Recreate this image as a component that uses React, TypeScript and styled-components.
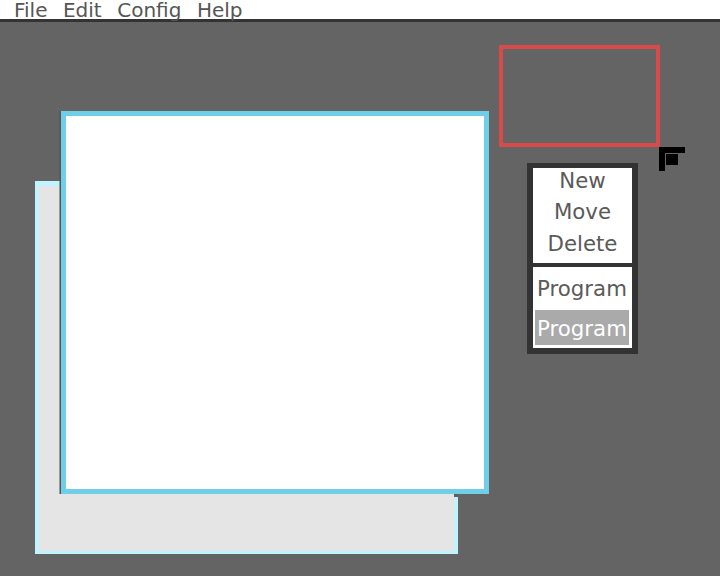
import React from "react";
import styled, { createGlobalStyle } from "styled-components";

const Global = createGlobalStyle`
  html, body { margin: 0; padding: 0; background: #646464; overflow: hidden; }
  body { font-family: "DejaVu Sans", "Liberation Sans", sans-serif; }
`;

const Screen = styled.div`
  width: 720px;
  height: 576px;
  display: flex;
  flex-direction: column;
  background: #646464;
`;

const MenuBar = styled.div`
  height: 19px;
  background: #ffffff;
  border-bottom: 3px solid #333333;
  display: flex;
  align-items: flex-start;
  gap: 15.5px;
  padding-left: 14px;
  flex-shrink: 0;
`;

const MenuItem = styled.span`
  font-size: 20px;
  line-height: 19px;
  padding-top: 0.5px;
  color: #555555;
`;

const Desktop = styled.div`
  position: relative;
  flex: 1;
`;

const Window = styled.div<{ $x: number; $y: number; $w: number; $h: number; $front?: boolean }>`
  position: absolute;
  left: ${(p) => p.$x}px;
  top: ${(p) => p.$y - 22}px;
  width: ${(p) => p.$w}px;
  height: ${(p) => p.$h}px;
  box-sizing: border-box;
  background: ${(p) => (p.$front ? "#ffffff" : "#e5e5e5")};
  border: ${(p) => (p.$front ? "5px solid #70cfe8" : "4px solid #bff3fd")};
  ${(p) => (p.$front ? "box-shadow: -1.5px 0 0 #555555;" : "border-top-width: 5px; border-bottom-width: 3px;")}
`;

const Notch = styled.div`
  position: absolute;
  left: 454px;
  top: ${493 - 22}px;
  width: 4px;
  height: 4px;
  background: #5e5e5e;
`;

const Selection = styled.div`
  position: absolute;
  left: 499px;
  top: ${45 - 22}px;
  width: 161px;
  height: 102px;
  box-sizing: border-box;
  border: 4px solid #d94b4b;
`;

const Cursor = styled.svg`
  position: absolute;
  left: 659px;
  top: ${147 - 22}px;
`;

const Palette = styled.div`
  position: absolute;
  left: 527px;
  top: ${163 - 22}px;
  width: 111px;
  box-sizing: border-box;
  background: #333333;
  padding: 5px 6px 6px 6px;
  display: flex;
  flex-direction: column;
  gap: 4px;
`;

const Section = styled.div<{ $pad?: string }>`
  background: #ffffff;
  display: flex;
  flex-direction: column;
  padding: ${(p) => p.$pad || "0"};
`;

const ToolItem = styled.div`
  height: 31.5px;
  box-sizing: border-box;
  line-height: 23.5px;
  padding-top: 0.5px;
  padding-bottom: 7.5px;
  font-size: 21.3px;
  color: #5a5a5a;
  text-align: center;
`;

const ModeItem = styled.div<{ $active?: boolean }>`
  height: 35px;
  box-sizing: border-box;
  padding-top: 2px;
  line-height: 33px;
  font-size: 21.3px;
  text-align: center;
  margin: 0 3px 0 2px;
  color: ${(p) => (p.$active ? "#ffffff" : "#5a5a5a")};
  background: ${(p) => (p.$active ? "#aaaaaa" : "transparent")};
`;

const Spacer = styled.div`
  height: 5px;
`;

export default function App() {
  return (
    <Screen>
      <Global />
      <MenuBar>
        <MenuItem>File</MenuItem>
        <MenuItem>Edit</MenuItem>
        <MenuItem>Config</MenuItem>
        <MenuItem>Help</MenuItem>
      </MenuBar>
      <Desktop>
        <Window $x={35} $y={181} $w={423} $h={373} />
        <Notch />
        <Window $x={61} $y={111} $w={428} $h={383} $front />
        <Selection />
        <Cursor width="26" height="24" viewBox="0 0 26 24">
          <rect x="0" y="0" width="26" height="6" fill="#000" />
          <rect x="0" y="0" width="6" height="24" fill="#000" />
          <rect x="7" y="7" width="12" height="11" fill="#000" />
        </Cursor>
        <Palette>
          <Section>
            <ToolItem>New</ToolItem>
            <ToolItem>Move</ToolItem>
            <ToolItem>Delete</ToolItem>
          </Section>
          <Section $pad="3px 0 3px 0">
            <ModeItem>Program</ModeItem>
            <Spacer />
            <ModeItem $active>Program</ModeItem>
          </Section>
        </Palette>
      </Desktop>
    </Screen>
  );
}
